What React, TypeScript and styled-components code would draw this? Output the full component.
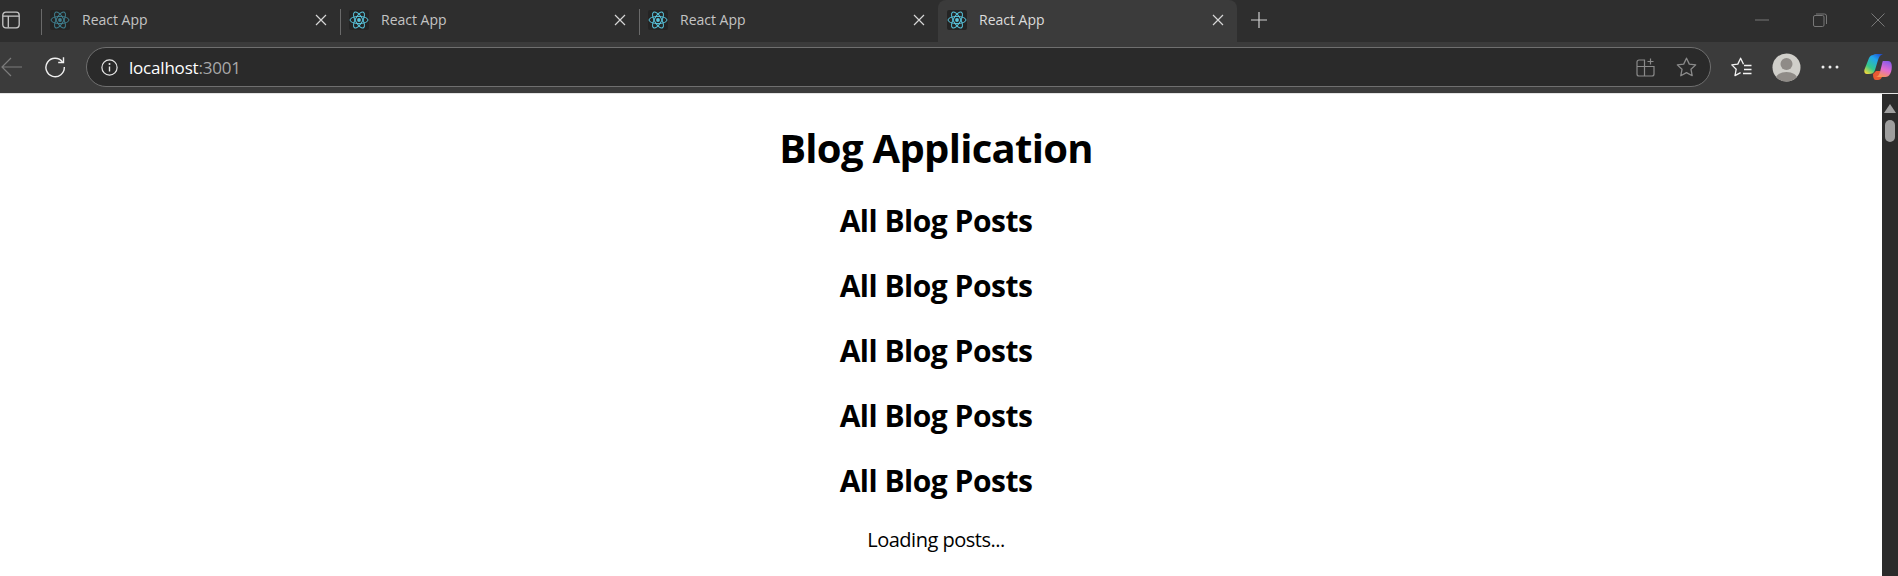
import React from "react";
import styled, { createGlobalStyle } from "styled-components";

const GlobalStyle = createGlobalStyle`
  html, body {
    margin: 0;
    height: 100%;
    overflow: hidden;
    background: #fff;
  }
  body {
    font-family: "Open Sans", "Noto Sans", sans-serif;
  }
`;

const Window = styled.div`
  display: flex;
  flex-direction: column;
  width: 1898px;
  height: 576px;
`;

const TabStrip = styled.div`
  display: flex;
  align-items: stretch;
  height: 42px;
  background: #2e2e2e;
`;

const SideToggle = styled.div`
  display: flex;
  align-items: center;
  width: 41px;
  padding: 0 0 3px 2px;
  box-sizing: border-box;
`;

const Tab = styled.div<{ $active?: boolean; $sep?: boolean }>`
  position: relative;
  display: flex;
  align-items: center;
  width: 299px;
  padding: 0 13px 3px 9px;
  box-sizing: border-box;
  background: ${(p) => (p.$active ? "#3b3b3b" : "transparent")};
  border-radius: ${(p) => (p.$active ? "8px 8px 0 0" : "0")};

  &::before {
    content: "";
    display: ${(p) => (p.$sep ? "block" : "none")};
    position: absolute;
    left: 0;
    top: 9px;
    height: 26px;
    width: 1px;
    background: #6a6a6a;
  }
`;

const TabTitle = styled.span<{ $dim?: boolean }>`
  flex: 1;
  margin-left: 12px;
  font-size: 14px;
  letter-spacing: 0;
  color: ${(p) => (p.$dim ? "#c4c4c4" : "#dcdcdc")};
`;

const NewTab = styled.div`
  display: flex;
  align-items: center;
  flex: 1;
  margin-left: 13px;
  padding-bottom: 3px;
`;

const WindowButtons = styled.div`
  display: flex;
  align-items: center;
  gap: 44px;
  padding: 0 13px 3px 0;
`;

const Toolbar = styled.div`
  display: flex;
  align-items: center;
  height: 51px;
  padding-bottom: 1px;
  box-sizing: border-box;
  background: #3b3b3b;
`;

const NavButtons = styled.div`
  display: flex;
  align-items: center;
  gap: 21px;
  width: 86px;
  padding-left: 1px;
  box-sizing: border-box;
`;

const AddressBar = styled.div`
  display: flex;
  align-items: center;
  width: 1625px;
  height: 40px;
  padding: 0 13px 0 10px;
  box-sizing: border-box;
  background: #2a2a2a;
  border: 1px solid #6f6f6f;
  border-radius: 20px;
`;

const InfoBadge = styled.div`
  display: flex;
  align-items: center;
  justify-content: center;
  width: 24px;
  height: 24px;
`;

const Url = styled.div`
  flex: 1;
  margin-left: 8px;
  font-size: 17px;
  letter-spacing: -0.2px;
  color: #fff;
  span {
    color: #a8a8a8;
  }
`;

const BarIcons = styled.div`
  display: flex;
  align-items: center;
  gap: 21px;
`;

const ToolIcons = styled.div`
  display: flex;
  align-items: center;
  flex: 1;
  gap: 20px;
  padding-left: 20px;
`;

const Avatar = styled.svg`
  width: 29px;
  height: 29px;
`;

const CopilotLogo = styled.svg`
  width: 28px;
  height: 26px;
  margin-left: 5px;
`;

const Body = styled.div`
  display: flex;
  flex: 1;
  min-height: 0;
  border-top: 1px solid #e4e4e4;
`;

const Page = styled.main`
  flex: 1;
  min-width: 0;
  padding-right: 10px;
  overflow: hidden;
  text-align: center;
  color: #000;
`;

const Title = styled.h1`
  margin: 27px 0;
  font-size: 40px;
  line-height: 53px;
  font-weight: 700;
  letter-spacing: -0.7px;
`;

const SectionTitle = styled.h2`
  margin: 25px 0;
  font-size: 30px;
  line-height: 40px;
  font-weight: 700;
  letter-spacing: -0.5px;
`;

const Status = styled.p`
  margin: 25px 0;
  font-size: 20px;
  line-height: 27px;
  letter-spacing: -0.5px;
`;

const Scrollbar = styled.div`
  display: flex;
  flex-direction: column;
  align-items: center;
  gap: 7px;
  width: 16px;
  padding-top: 10px;
  box-sizing: border-box;
  background: #2b2b2b;
`;

const ScrollArrow = styled.div`
  width: 0;
  height: 0;
  border-left: 6px solid transparent;
  border-right: 6px solid transparent;
  border-bottom: 9px solid #a0a0a0;
`;

const ScrollThumb = styled.div`
  width: 10px;
  height: 22px;
  border-radius: 5px;
  background: #9e9e9e;
`;

function ReactIcon({ dim }: { dim?: boolean }) {
  const color = dim ? "#3f7f8f" : "#58c4dc";
  return (
    <svg width="20" height="20" viewBox="0 0 20 20" style={{ background: "#242424", borderRadius: 2, flexShrink: 0 }}>
      <circle cx="10" cy="10" r="1.9" fill={color} />
      <g fill="none" stroke={color} strokeWidth="1">
        <ellipse cx="10" cy="10" rx="9" ry="3.6" />
        <ellipse cx="10" cy="10" rx="9" ry="3.6" transform="rotate(60 10 10)" />
        <ellipse cx="10" cy="10" rx="9" ry="3.6" transform="rotate(120 10 10)" />
      </g>
    </svg>
  );
}

function CloseIcon() {
  return (
    <svg width="12" height="12" viewBox="0 0 12 12" style={{ flexShrink: 0 }}>
      <path d="M1 1l10 10M11 1L1 11" stroke="#d6d6d6" strokeWidth="1.2" />
    </svg>
  );
}

export default function App() {
  const tabs = [
    { dim: true, sep: true },
    { sep: true },
    { sep: true },
    { active: true },
  ];

  return (
    <Window>
      <GlobalStyle />
      <TabStrip>
        <SideToggle>
          <svg width="18" height="18" viewBox="0 0 18 18" fill="none" stroke="#c8c8c8" strokeWidth="1.3">
            <rect x="0.8" y="1.2" width="16.4" height="15.6" rx="3" />
            <path d="M1 5.2h16M6.3 5.2v11.4" />
          </svg>
        </SideToggle>
        {tabs.map((t, i) => (
          <Tab key={i} $active={t.active} $sep={t.sep}>
            <ReactIcon dim={t.dim} />
            <TabTitle $dim={!t.active}>React App</TabTitle>
            <CloseIcon />
          </Tab>
        ))}
        <NewTab>
          <svg width="18" height="18" viewBox="0 0 18 18">
            <path d="M9 1v16M1 9h16" stroke="#d0d0d0" strokeWidth="1.2" />
          </svg>
        </NewTab>
        <WindowButtons>
          <svg width="14" height="14" viewBox="0 0 14 14">
            <path d="M0 7h14" stroke="#777" strokeWidth="1" />
          </svg>
          <svg width="14" height="14" viewBox="0 0 14 14" fill="none" stroke="#777" strokeWidth="1">
            <rect x="0.5" y="2.5" width="10.5" height="11" rx="1.5" />
            <path d="M3 1h8.5a2 2 0 0 1 2 2v8" />
          </svg>
          <svg width="14" height="14" viewBox="0 0 14 14">
            <path d="M0.5 0.5l13 13M13.5 0.5l-13 13" stroke="#777" strokeWidth="1" />
          </svg>
        </WindowButtons>
      </TabStrip>
      <Toolbar>
        <NavButtons>
          <svg width="22" height="20" viewBox="0 0 22 20" fill="none" stroke="#7c7c7c" strokeWidth="1.2">
            <path d="M21 10H1M10 1l-9 9 9 9" />
          </svg>
          <svg width="22" height="22" viewBox="0 0 22 22" fill="none" stroke="#f0f0f0" strokeWidth="1.4">
            <path d="M18.5 6A9.2 9.2 0 1 0 20.3 11" />
            <path d="M19.5 1.2v5.3h-5.3" />
          </svg>
        </NavButtons>
        <AddressBar>
          <InfoBadge>
            <svg width="17" height="17" viewBox="0 0 17 17" fill="none">
              <circle cx="8.5" cy="8.5" r="7.6" stroke="#e6e6e6" strokeWidth="1.2" />
              <path d="M8.5 7.5v5" stroke="#e6e6e6" strokeWidth="1.4" />
              <circle cx="8.5" cy="5" r="1" fill="#e6e6e6" />
            </svg>
          </InfoBadge>
          <Url>
            localhost<span>:3001</span>
          </Url>
          <BarIcons>
            <svg width="19" height="19" viewBox="0 0 19 19" fill="none" stroke="#8a8a8a" strokeWidth="1.2">
              <path d="M8.5 2H3a2 2 0 0 0-2 2v4.5h7.5zM1 8.5V16a2 2 0 0 0 2 2h5.5V8.5M8.5 18H16a2 2 0 0 0 2-2V8.5H8.5" />
              <path d="M14.5 0.5v6M11.5 3.5h6" />
            </svg>
            <svg width="21" height="20" viewBox="0 0 21 20" fill="none" stroke="#8a8a8a" strokeWidth="1.3">
              <path d="M10.5 1.2l2.8 5.9 6.4.8-4.700 4.400 1.200 6.400-5.700-3.100-5.700 3.100 1.200-6.400L1.300 7.900l6.400-.8z" strokeLinejoin="round" />
            </svg>
          </BarIcons>
        </AddressBar>
        <ToolIcons>
          <svg width="21" height="20" viewBox="0 0 21 20" fill="none" stroke="#f2f2f2" strokeWidth="1.3">
            <path d="M12.5 7.3L9.6 1.2 6.8 7.1l-6 .8 4.400 4.300L4 18.600l5.600-3" strokeLinejoin="round" />
            <path d="M13 8.5h7.5M13 12.5h7.5M12 16.5h8.5" />
          </svg>
          <Avatar viewBox="0 0 29 29">
            <defs>
              <clipPath id="avatarClip">
                <circle cx="14.5" cy="14.5" r="14" />
              </clipPath>
            </defs>
            <circle cx="14.5" cy="14.5" r="14" fill="#d0cfca" />
            <g clipPath="url(#avatarClip)" fill="#8f8b87">
              <circle cx="14.5" cy="11" r="6" />
              <ellipse cx="14.5" cy="26" rx="11" ry="7" />
            </g>
          </Avatar>
          <svg width="18" height="4" viewBox="0 0 18 4" fill="#eee">
            <circle cx="2" cy="2" r="1.5" />
            <circle cx="9" cy="2" r="1.5" />
            <circle cx="16" cy="2" r="1.5" />
          </svg>
          <CopilotLogo viewBox="0 0 28 26">
            <defs>
              <linearGradient id="copilotLeft" x1="0.85" y1="0" x2="0.15" y2="1">
                <stop offset="0" stopColor="#1f4fd0" />
                <stop offset="0.3" stopColor="#22a6ee" />
                <stop offset="0.7" stopColor="#35c98a" />
                <stop offset="1" stopColor="#f0d83c" />
              </linearGradient>
              <linearGradient id="copilotRight" x1="0.7" y1="0" x2="0.3" y2="1">
                <stop offset="0" stopColor="#8c5be8" />
                <stop offset="0.5" stopColor="#e26bd0" />
                <stop offset="1" stopColor="#f8964e" />
              </linearGradient>
            </defs>
            <path d="M9 20l3-3h4l2 6c-1 2-2 3-4 3h-2c-2 0-3-2-3-6z" fill="#ea5a32" />
            <path d="M9 1c1-.7 2-1 3-1h7c-3 1-4 3-5 6l-3 10c-1 3-3 4-6 4H3c-2.200 0-3.200-2-2.500-4.500L5 4c1-2 2.500-3 4-3z" fill="url(#copilotLeft)" />
            <path d="M19 7h5c2 0 3 1 3.500 3 .8 4 0 9-2.500 11.500-1 1-3 1.500-5 1.500h-9c3 0 4-2 5-5l2-8c.3-1 .5-3 1-3z" fill="url(#copilotRight)" />
          </CopilotLogo>
        </ToolIcons>
      </Toolbar>
      <Body>
        <Page>
          <Title>Blog Application</Title>
          <SectionTitle>All Blog Posts</SectionTitle>
          <SectionTitle>All Blog Posts</SectionTitle>
          <SectionTitle>All Blog Posts</SectionTitle>
          <SectionTitle>All Blog Posts</SectionTitle>
          <SectionTitle>All Blog Posts</SectionTitle>
          <Status>Loading posts...</Status>
        </Page>
        <Scrollbar>
          <ScrollArrow />
          <ScrollThumb />
        </Scrollbar>
      </Body>
    </Window>
  );
}
